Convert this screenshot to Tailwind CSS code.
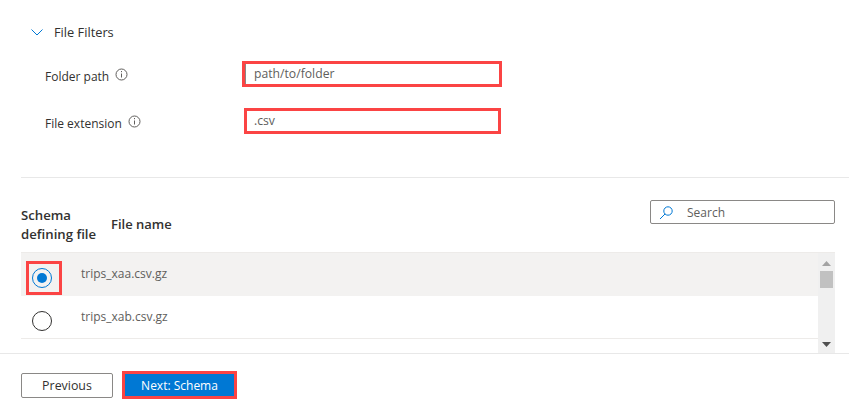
<!DOCTYPE html>
<html lang="en">
<head>
    <meta charset="UTF-8">
    <title>File Filters</title>
    <script src="https://cdn.jsdelivr.net/npm/@tailwindcss/browser@4"></script>
</head>
<body class="bg-white overflow-hidden font-['Open_Sans',sans-serif] text-[12px] text-[#323130]">
<div class="w-[849px] h-[412px] flex flex-col">

    <!--File filters-->
    <div class="h-[177px] pl-[31px] pt-[24px] shrink-0">
        <div class="flex items-center h-[16px]">
            <svg width="12" height="7" viewBox="0 0 12 7" fill="none" stroke="#0078d4" stroke-width="1"><path d="M0.5 0.5 L6 6 L11.5 0.5"/></svg>
            <span class="ml-[11px] text-[12.8px] pt-[1px]">File Filters</span>
        </div>

        <div class="flex items-center mt-[21px] h-[26px]">
            <div class="w-[211px] pl-[14px] flex items-center pt-[5px]">
                <span>Folder path</span>
                <svg class="ml-[6px] -mt-[4px]" width="13" height="13" viewBox="0 0 13 13" fill="none" stroke="#605e5c"><circle cx="6.5" cy="6.5" r="5.5"/><path d="M6.5 5.5v4M6.5 3v1.2"/></svg>
            </div>
            <div class="w-[260px] h-[26px] border-[3px] border-[#fb4444] flex items-center text-[#605e5c] text-[12.2px]">
                <div class="h-full border-l border-[#8a8886] pl-[8px] flex items-center">path/to/folder</div>
            </div>
        </div>

        <div class="flex items-center mt-[21px] h-[26px]">
            <div class="w-[213px] pl-[14px] flex items-center pt-[5px]">
                <span>File extension</span>
                <svg class="ml-[6px] -mt-[4px]" width="13" height="13" viewBox="0 0 13 13" fill="none" stroke="#605e5c"><circle cx="6.5" cy="6.5" r="5.5"/><path d="M6.5 5.5v4M6.5 3v1.2"/></svg>
            </div>
            <div class="w-[257px] h-[26px] border-[3px] border-[#fb4444] pl-[7px] flex items-center text-[#605e5c] text-[12.2px]">.csv</div>
        </div>
    </div>

    <!--File list-->
    <div class="ml-[21px] h-[176px] shrink-0 border-t border-[#e8e8e8] flex flex-col">
        <div class="h-[74px] w-[814px] flex items-start shrink-0">
            <div class="w-[90px] pt-[28px] font-semibold text-[13.2px] leading-[19px] whitespace-nowrap">Schema<br>defining file</div>
            <div class="pt-[37px] font-semibold text-[13px] leading-[19px]">File name</div>
            <div class="ml-auto mt-[22px] w-[185px] h-[24px] border border-[#8a8886] rounded-[2px] flex items-center pl-[8px] pt-[1px]">
                <svg width="14" height="14" viewBox="0 0 14 14" fill="none" stroke="#0078d4"><circle cx="9" cy="5" r="4.2"/><path d="M6 8 L1 13"/></svg>
                <span class="ml-[14px] text-[#605e5c]">Search</span>
            </div>
        </div>

        <div class="w-[814px] grow flex border-t border-[#edebe9] relative">
            <div class="grow">
                <div class="h-[43px] bg-[#f3f2f1] flex items-start">
                    <div class="w-[60px] relative h-full">
                        <div class="ml-[5px] mt-[8px] w-[36px] h-[34px] border-[3px] border-[#fb4444] flex items-center justify-center pr-[4px]">
                            <div class="w-[20px] h-[20px] rounded-full border border-[#0078d4] flex items-center justify-center">
                                <div class="w-[10px] h-[10px] rounded-full bg-[#0078d4]"></div>
                            </div>
                        </div>
                    </div>
                    <span class="mt-[12px] text-[#605e5c]">trips_xaa.csv.gz</span>
                </div>
                <div class="h-[43px] border-b border-[#edebe9] flex items-start">
                    <div class="w-[60px]">
                        <div class="ml-[11px] mt-[15px] w-[20px] h-[20px] rounded-full border border-[#323130]"></div>
                    </div>
                    <span class="mt-[12px] text-[#605e5c]">trips_xab.csv.gz</span>
                </div>
            </div>

            <!--Scrollbar-->
            <div class="w-[17px] bg-[#f0f0f0] flex flex-col items-center shrink-0">
                <svg class="mt-[8px]" width="9" height="5" viewBox="0 0 9 5" fill="#a3a3a3"><path d="M4.5 0 L9 5 H0 Z"/></svg>
                <div class="mt-[5px] w-[13px] h-[17px] bg-[#c1c1c1]"></div>
                <svg class="mt-auto mb-[6px]" width="9" height="5" viewBox="0 0 9 5" fill="#505050"><path d="M0 0 H9 L4.5 5 Z"/></svg>
            </div>
        </div>
    </div>

    <!--Footer-->
    <div class="border-t border-[#e8e8e8] grow pl-[21px] pt-[17px] flex items-start">
        <button class="mt-[2px] w-[92px] h-[25px] border border-[#8a8886] rounded-[2px] font-medium text-[12.4px] pt-[1px]">Previous</button>
        <div class="ml-[9px] w-[115px] h-[28px] border-[3px] border-[#fb4444] bg-[#0078d4] text-white font-medium flex items-center justify-center pt-[1px]">Next: Schema</div>
    </div>
</div>
</body>
</html>
